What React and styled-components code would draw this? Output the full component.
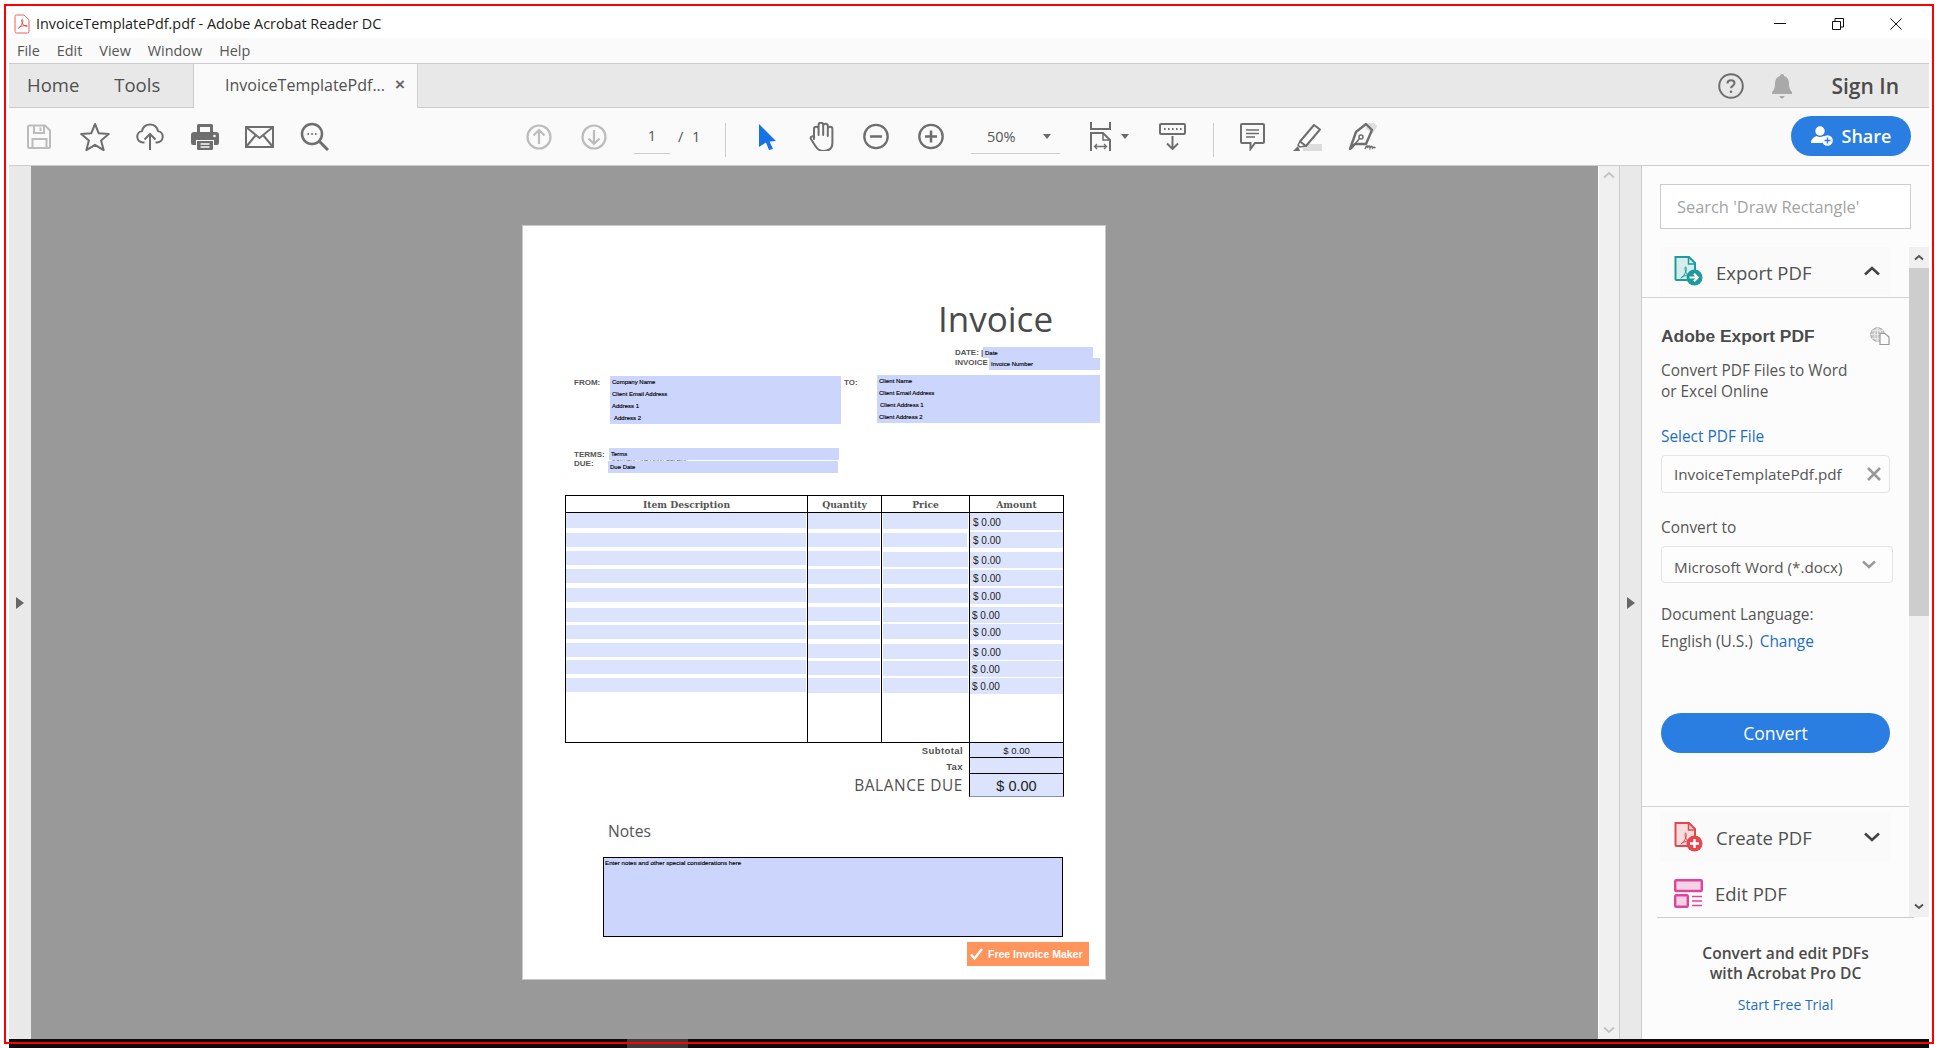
import React from "react";
import styled, { createGlobalStyle } from "styled-components";

const UI = '"Open Sans", "Noto Sans", sans-serif';
const ARIAL = '"Liberation Sans", Arial, sans-serif';
const PX = 522;
const PY = 225;

const Global = createGlobalStyle`
  html, body { margin: 0; padding: 0; background: #fff; }
  * { box-sizing: border-box; }
`;

const Screen = styled.div`
  position: relative;
  width: 1938px;
  height: 1048px;
  padding: 6px 9px 0 9px;
  background: #fff;
  overflow: hidden;
  font-family: ${UI};
  color: #4b4b4b;
`;
const RedFrame = styled.div`
  position: absolute;
  left: 4px;
  top: 4px;
  width: 1930px;
  height: 1040px;
  border: 2px solid #f00;
  pointer-events: none;
  z-index: 5;
`;
const Win = styled.div`
  width: 1920px;
  height: 1042px;
  display: flex;
  flex-direction: column;
`;
const TitleBar = styled.div`
  height: 32px;
  flex: none;
  display: flex;
  align-items: center;
  padding: 3px 0 0 5px;
  background: #fff;
`;
const TitleText = styled.span`
  margin-left: 6px;
  font-size: 14.4px;
  color: #222;
`;
const WinControls = styled.div`
  margin-left: auto;
  margin-right: 27px;
  display: flex;
  gap: 46px;
  align-items: center;
`;
const MenuBar = styled.div`
  height: 26px;
  flex: none;
  display: flex;
  align-items: center;
  gap: 17px;
  padding: 0 0 1px 8px;
  background: #fafafa;
  border-bottom: 1px solid #ccc;
`;
const MenuItem = styled.span`
  font-size: 14.4px;
  color: #555;
`;
const TabBar = styled.div`
  height: 44px;
  flex: none;
  display: flex;
  background: #e8e8e8;
  border-bottom: 1px solid #ccc;
`;
const NavTabs = styled.div`
  width: 184px;
  display: flex;
  align-items: center;
  gap: 35px;
  padding: 0 0 2px 18px;
`;
const NavTab = styled.span`
  font-size: 18.5px;
  color: #505050;
`;
const DocTab = styled.div`
  width: 225px;
  height: 44px;
  display: flex;
  align-items: center;
  padding: 0 0 2px 31px;
  background: #fafafa;
  border-left: 1px solid #ccc;
  border-right: 1px solid #ccc;
`;
const DocTabName = styled.span`
  font-size: 16px;
  color: #505050;
`;
const DocTabClose = styled.span`
  margin-left: 10px;
  font-size: 17px;
  font-weight: 700;
  color: #666;
  font-family: ${ARIAL};
`;
const TabRight = styled.div`
  margin-left: auto;
  display: flex;
  align-items: center;
  padding-right: 30px;
`;
const SignIn = styled.span`
  margin-left: 38px;
  font-size: 21px;
  font-weight: 600;
  color: #4b4b4b;
`;
const BellWrap = styled.span`
  margin-left: 27px;
  display: flex;
`;
const Toolbar = styled.div`
  height: 58px;
  flex: none;
  display: flex;
  align-items: center;
  padding-left: 3px;
  background: #fafafa;
  border-bottom: 1px solid #ccc;
`;
const Slot = styled.span`
  width: 55px;
  height: 40px;
  flex: none;
  margin-left: ${(p) => p.$ml || 0}px;
  padding-left: ${(p) => p.$shift || 0}px;
  display: flex;
  align-items: center;
  justify-content: center;
`;
const PageBox = styled.span`
  width: 36px;
  height: 28px;
  margin-left: 13px;
  margin-top: 6px;
  border-bottom: 1px solid #ccc;
  text-align: center;
  font-size: 14.5px;
  line-height: 20px;
  color: #555;
`;
const PageTotal = styled.span`
  width: 24px;
  margin-left: 8px;
  font-size: 14.5px;
  color: #555;
  word-spacing: 5px;
  white-space: nowrap;
`;
const ToolDivider = styled.span`
  width: 1px;
  height: 34px;
  flex: none;
  margin: 6px 0 0 ${(p) => p.$ml}px;
  background: #ccc;
`;
const ZoomBox = styled.span`
  width: 89px;
  height: 28px;
  margin: 6px 0 0 13px;
  display: flex;
  align-items: center;
  justify-content: space-between;
  padding: 0 9px 5px 16px;
  border-bottom: 1px solid #ccc;
  font-size: 14.5px;
  color: #555;
`;
const Caret = styled.span`
  width: 0;
  height: 0;
  border-left: 4px solid transparent;
  border-right: 4px solid transparent;
  border-top: 5px solid #6a6a6a;
`;
const FitSlot = styled.span`
  margin-left: 30px;
  height: 40px;
  display: flex;
  align-items: center;
  gap: 10px;
`;
const ShareButton = styled.button`
  margin: 0 18px 1px auto;
  width: 120px;
  height: 40px;
  display: flex;
  align-items: center;
  justify-content: center;
  gap: 8px;
  border: 0;
  border-radius: 20px;
  background: #2a7de1;
  color: #fff;
  font-family: ${UI};
  font-size: 18px;
  font-weight: 600;
`;
const Main = styled.div`
  height: 873px;
  flex: none;
  display: flex;
`;
const SideStrip = styled.div`
  width: 22px;
  flex: none;
  display: flex;
  align-items: center;
  justify-content: center;
  background: #e9e9e9;
  border-right: ${(p) => (p.$line ? "1px solid #ccc" : "0")};
`;
const Triangle = styled.span`
  width: 0;
  height: 0;
  border-top: 6px solid transparent;
  border-bottom: 6px solid transparent;
  border-left: 8px solid #666;
`;
const DocArea = styled.div`
  flex: 1;
  display: flex;
  padding: 59px 0 0 491px;
  background: #999;
`;
const DocScroll = styled.div`
  width: 22px;
  flex: none;
  display: flex;
  flex-direction: column;
  justify-content: space-between;
  align-items: center;
  padding: 5px 0;
  background: #f0f0f0;
  border-left: 1px solid #fff;
  border-right: 1px solid #ccc;
`;
const Sidebar = styled.div`
  width: 287px;
  flex: none;
  display: flex;
  flex-direction: column;
  background: #fcfcfc;
`;
const SearchBox = styled.div`
  width: 251px;
  height: 45px;
  flex: none;
  margin: 18px 0 18px 18px;
  padding-left: 16px;
  display: flex;
  align-items: center;
  background: #fff;
  border: 1px solid #ccc;
  font-size: 16.400px;
  color: #a3a3a3;
`;
const PanelScroll = styled.div`
  height: 670px;
  flex: none;
  display: flex;
`;
const Pane = styled.div`
  width: 267px;
  overflow: hidden;
`;
const SectionHead = styled.div`
  height: 51px;
  padding: 0 0 3px 18px;
  border-bottom: 1px solid #d4d4d4;
`;
const ToolRow = styled.div`
  width: 230px;
  height: ${(p) => p.$h}px;
  margin-left: ${(p) => p.$ml || 0}px;
  margin-top: ${(p) => p.$mt || 0}px;
  display: flex;
  align-items: center;
  padding: 0 10px 0 14px;
  background: ${(p) => (p.$plain ? "transparent" : "#fafafa")};
`;
const ToolName = styled.span`
  margin-left: 12px;
  padding-top: ${(p) => p.$pt || 0}px;
  font-size: 18.5px;
  color: #505050;
`;
const RowChevron = styled.span`
  margin-left: auto;
  display: flex;
`;
const Section = styled.div`
  height: 509px;
  padding: 28px 0 0 19px;
  border-bottom: 1px solid #d4d4d4;
`;
const SectionTitleRow = styled.div`
  display: flex;
  align-items: center;
  justify-content: space-between;
  width: 229px;
  height: 20px;
`;
const SectionTitle = styled.span`
  font-family: ${ARIAL};
  font-size: 17.4px;
  font-weight: 700;
  color: #4b4b4b;
`;
const Body = styled.div`
  margin-top: ${(p) => p.$mt}px;
  font-size: 15.4px;
  line-height: ${(p) => p.$lh || 20}px;
  color: #555;
`;
const Link = styled.span`
  color: #1b6fc2;
  margin-left: ${(p) => p.$ml || 0}px;
`;
const Input = styled.div`
  width: ${(p) => p.$w}px;
  height: ${(p) => p.$h}px;
  margin-top: 8px;
  display: flex;
  align-items: center;
  justify-content: space-between;
  padding: 0 ${(p) => p.$pr}px 0 12px;
  background: #fdfdfd;
  border: 1px solid #e4e4e4;
  border-radius: 4px;
  font-size: 15.2px;
  color: #555;
`;
const SelectValue = styled.span`
  padding-top: 4px;
`;
const ConvertButton = styled.button`
  display: block;
  width: 229px;
  height: 40px;
  margin-top: 61px;
  border: 0;
  border-radius: 20px;
  background: #2a7de1;
  color: #fff;
  font-family: ${UI};
  font-size: 17.6px;
`;
const VScroll = styled.div`
  width: 20px;
  flex: none;
  display: flex;
  flex-direction: column;
  background: #f0f0f0;
`;
const ScrollBtn = styled.div`
  height: 21px;
  flex: none;
  display: flex;
  align-items: center;
  justify-content: center;
`;
const ScrollThumb = styled.div`
  height: 348px;
  flex: none;
  background: #cdcdcd;
`;
const ScrollRest = styled.div`
  flex: 1;
`;
const Promo = styled.div`
  flex: 1;
  text-align: center;
`;
const PromoRule = styled.div`
  width: 257px;
  height: 1px;
  margin-left: 15px;
  background: #ccc;
`;
const PromoTitle = styled.div`
  margin-top: 25px;
  font-size: 15.6px;
  font-weight: 600;
  line-height: 20px;
  color: #4b4b4b;
`;
const PromoLink = styled.div`
  margin-top: 12px;
  font-size: 14px;
  line-height: 20px;
  color: #1b6fc2;
`;
const BottomStrip = styled.div`
  height: 9px;
  flex: none;
  background: #0a0a0a;
  padding-left: 618px;
`;
const StripSegment = styled.div`
  width: 61px;
  height: 9px;
  background: #3c3c3c;
`;

/* The PDF page is a free canvas: everything on it sits at its printed place. */
const Page = styled.div`
  position: relative;
  width: 584px;
  height: 755px;
  flex: none;
  background: #fff;
  border: 1px solid #c9c9c9;
  font-family: ${ARIAL};
`;
const Placed = styled.div`
  position: absolute;
  left: ${(p) => p.$x - PX - 1}px;
  top: ${(p) => p.$y - PY - 1}px;
  white-space: nowrap;
`;
const InvoiceTitle = styled(Placed)`
  font-family: ${UI};
  font-size: 35px;
  line-height: 40px;
  color: #4a4a4a;
`;
const FormLabel = styled(Placed)`
  font-size: 8px;
  font-weight: 700;
  line-height: 10px;
  color: #555;
`;
const Field = styled(Placed)`
  width: ${(p) => p.$w}px;
  height: ${(p) => p.$h}px;
  background: ${(p) => p.$bg || "#ccd6fd"};
  display: flex;
  align-items: center;
  padding-left: ${(p) => p.$pad || 0}px;
  padding-top: ${(p) => p.$pt || 0}px;
  color: #222;
  font-size: 10px;
`;
const MultiField = styled(Field)`
  flex-direction: column;
  align-items: flex-start;
  justify-content: flex-start;
`;
const FieldLine = styled.span`
  height: 12px;
  margin-left: ${(p) => p.$ml || 0}px;
  font-size: 6px;
  line-height: 12px;
  color: #000;
  -webkit-text-stroke: 0.15px #000;
`;
const TinyText = styled.span`
  font-size: 6px;
  color: #000;
  -webkit-text-stroke: 0.15px #000;
`;
const GhostText = styled(Placed)`
  font-size: 6px;
  line-height: 8px;
  color: #555;
`;
const ItemTable = styled(Placed)`
  width: 499px;
  height: 248px;
  display: grid;
  grid-template-columns: 242px 74px 88px 1fr;
  grid-template-rows: 17px 1fr;
  border: 1px solid #000;
`;
const HeadCell = styled.div`
  display: flex;
  align-items: center;
  justify-content: center;
  border-bottom: 1px solid #000;
  border-right: ${(p) => (p.$last ? "0" : "1px solid #000")};
  font-family: "DejaVu Serif", serif;
  font-size: 9.2px;
  font-weight: 700;
  color: #555;
`;
const BodyCell = styled.div`
  border-right: ${(p) => (p.$last ? "0" : "1px solid #000")};
`;
const Totals = styled(Placed)`
  width: 494px;
  display: flex;
  flex-direction: column;
`;
const TotalRow = styled.div`
  height: ${(p) => p.$h}px;
  display: flex;
`;
const TotalLabel = styled.div`
  width: 399px;
  padding-right: 6px;
  display: flex;
  align-items: center;
  justify-content: flex-end;
  font-size: ${(p) => p.$fs}px;
  font-weight: ${(p) => (p.$big ? 400 : 700)};
  font-family: ${(p) => (p.$big ? UI : ARIAL)};
  letter-spacing: ${(p) => (p.$big ? 0.6 : 0.4)}px;
  color: #505050;
`;
const TotalValue = styled.div`
  width: 95px;
  display: flex;
  align-items: center;
  justify-content: center;
  padding-top: ${(p) => p.$pt || 0}px;
  background: #dce3fd;
  border-left: 1px solid #000;
  border-right: 1px solid #000;
  border-bottom: 1px solid ${(p) => p.$under || "#000"};
  font-size: ${(p) => p.$fs}px;
  color: #222;
`;
const NotesTitle = styled(Placed)`
  font-family: ${UI};
  font-size: 15.6px;
  line-height: 20px;
  color: #555;
`;
const NotesBox = styled(Placed)`
  width: 460px;
  height: 80px;
  padding: 1px 0 0 1px;
  background: #ccd6fd;
  border: 1px solid #000;
  font-size: 6.2px;
  line-height: 8px;
  color: #000;
  -webkit-text-stroke: 0.15px #000;
`;
const MakerBadge = styled(Placed)`
  width: 122px;
  height: 24px;
  display: flex;
  align-items: center;
  gap: 5px;
  padding-left: 3px;
  background: #ff945c;
  color: #fff;
  font-size: 10.5px;
  font-weight: 700;
`;

const G = "#6e6e6e";
const L = "#bcbcbc";

const Svg = ({ w, h, children, ...r }) => (
  <svg width={w} height={h} viewBox={`0 0 ${w} ${h}`} fill="none" {...r}>
    {children}
  </svg>
);

const Glyph = ({ c, sw = 1.3, t = "" }) => (
  <path d="M5 17c2-1 4-4 5-7 .6-2 .4-4-.4-4-.8 0-.7 2-.2 4 .7 2.500 2.500 4.500 5.600 4.800 1.400.1 1.500-.8.300-1-2.300-.4-6 .5-8.300 1.700C5.500 16.300 4.400 17.500 5 17z" stroke={c} strokeWidth={sw} transform={t} />
);

const PdfIcon = () => (
  <Svg w={16} h={20}>
    <path d="M1 2.500A1.500 1.500 0 0 1 2.500 1H10l5 5v11.500a1.500 1.500 0 0 1-1.500 1.500h-11A1.500 1.500 0 0 1 1 17.500z" fill="#fff" stroke="#e8605f" />
    <Glyph c="#e02f2f" sw={1} t="translate(0.500 0.500) scale(0.8)" />
  </Svg>
);
const MinIcon = () => (<Svg w={12} h={12}><path d="M0 5.500h12" stroke="#111" /></Svg>);
const RestoreIcon = () => (
  <Svg w={12} h={12}><path d="M.5 3.500h8v8h-8zM3 3.500V.5h8.500V9H8.500" stroke="#111" /></Svg>
);
const CloseIcon = () => (<Svg w={12} h={12}><path d="M.5.5l11 11M11.500.5l-11 11" stroke="#111" /></Svg>);
const HelpIcon = () => (
  <Svg w={26} h={26}>
    <circle cx="13" cy="13" r="11.800" stroke={G} strokeWidth="2" />
    <path d="M9.500 10.500c0-2 1.500-3.200 3.500-3.200s3.500 1.200 3.500 3c0 2.500-3.500 2.700-3.500 5" stroke={G} strokeWidth="2" />
    <circle cx="13" cy="18.800" r="1.300" fill={G} />
  </Svg>
);
const BellIcon = () => (
  <Svg w={22} h={26}>
    <path d="M11 1c1.300 0 2 .8 2 2 3.500 1 5 3.800 5 7.500 0 4 1 6.500 3 8.500v2H1v-2c2-2 3-4.500 3-8.500C4 6.800 5.500 4 9 3c0-1.200.7-2 2-2zM8.500 23h5c-.3 1.600-1.200 2.500-2.500 2.500S8.800 24.600 8.500 23z" fill="#a9a9a9" />
  </Svg>
);
const SaveIcon = () => (
  <Svg w={25} h={25}>
    <path d="M2.500 1.500H18l5 5v16a1.500 1.500 0 0 1-1.500 1.500h-19A1.500 1.500 0 0 1 1 22.500V3a1.500 1.500 0 0 1 1.500-1.500z" stroke={L} strokeWidth="2" />
    <path d="M7 2v7h10V2M5.500 24v-9h14v9" stroke={L} strokeWidth="2" />
    <path d="M13.500 3.500v3.500" stroke={L} strokeWidth="2" />
  </Svg>
);
const StarIcon = () => (
  <Svg w={30} h={29}>
    <path d="M15 2l3.800 9.300 10 .7-7.700 6.400 2.500 9.700L15 22.800l-8.600 5.300 2.500-9.700L1.200 12l10-.7z" stroke={G} strokeWidth="2" strokeLinejoin="round" />
  </Svg>
);
const CloudIcon = () => (
  <Svg w={28} h={28}>
    <path d="M8.500 19.500H7a5.800 5.800 0 0 1-1-11.500C7 4 10 1.500 14 1.500S21 4 22 8a5.800 5.800 0 0 1-1 11.500h-1.500" stroke={G} strokeWidth="2" />
    <path d="M14 27V11M8.500 16.500L14 11l5.500 5.500" stroke={G} strokeWidth="2" />
  </Svg>
);
const PrintIcon = () => (
  <Svg w={28} h={27}>
    <path d="M6 10V2.500A1.500 1.500 0 0 1 7.500 1h13A1.500 1.500 0 0 1 22 2.500V10h-3V4H9v6z" fill={G} />
    <path d="M3 9h22a3 3 0 0 1 3 3v8a2 2 0 0 1-2 2h-3v-5H5v5H2a2 2 0 0 1-2-2v-8a3 3 0 0 1 3-3z" fill={G} />
    <path d="M6 18h16v7.500a1.500 1.500 0 0 1-1.500 1.500h-13A1.500 1.500 0 0 1 6 25.500z" fill={G} />
    <path d="M9.500 21h9M9.500 24h9" stroke="#fafafa" strokeWidth="1.300" />
    <circle cx="23.500" cy="13" r="1.300" fill="#fafafa" />
  </Svg>
);
const MailIcon = () => (
  <Svg w={29} h={22}>
    <path d="M1 1h27v20H1zM1 1l13.500 11L28 1M1 21l10-12M28 21L18 9" stroke={G} strokeWidth="2" />
  </Svg>
);
const SearchIcon = () => (
  <Svg w={29} h={29}>
    <circle cx="12" cy="12" r="10" stroke={G} strokeWidth="2.500" />
    <path d="M19 19l9 9" stroke={G} strokeWidth="3" />
    <path d="M7.500 12h1.500M11.300 12h1.500M15 12h1.500" stroke={G} strokeWidth="1.800" />
  </Svg>
);
const CircleArrow = ({ down }) => (
  <Svg w={26} h={26}>
    <circle cx="13" cy="13" r="11.500" stroke={L} strokeWidth="2.200" />
    <path d={down ? "M13 6v14M7.500 14.500L13 20l5.500-5.500" : "M13 20V6M7.500 11.500L13 6l5.500 5.500"} stroke={L} strokeWidth="2.200" />
  </Svg>
);
const PointerIcon = () => (
  <Svg w={17} h={26}>
    <path d="M0 0l17 17-6.500.5L14 25l-4 1-3-7.500L0 23z" fill="#1473e6" />
  </Svg>
);
const HandIcon = () => (
  <Svg w={27} h={29}>
    <path d="M7 17V7a2.300 2.300 0 0 1 4.600 0v6-10a2.300 2.300 0 0 1 4.600 0v10-9a2.300 2.300 0 0 1 4.600 0v10-7a2.300 2.300 0 0 1 4.600 0v14c0 5.500-3.500 8-9 8-3.500 0-6-1.500-8-5l-4.500-7c-1.200-2.200 1.800-3.800 3.300-1.800z" stroke={G} strokeWidth="2" strokeLinejoin="round" />
  </Svg>
);
const ZoomOutIcon = ({ plus }) => (
  <Svg w={26} h={27}>
    <circle cx="13" cy="13.500" r="11.700" stroke={G} strokeWidth="2.300" />
    <path d="M7 13.500h12" stroke={G} strokeWidth="2.500" />
    {plus && <path d="M13 7.500v12" stroke={G} strokeWidth="2.500" />}
  </Svg>
);
const FitIcon = () => (
  <Svg w={21} h={29}>
    <path d="M1 0v7h19V0" stroke={G} strokeWidth="2" />
    <path d="M1 29V11h12l7 7v11" stroke={G} strokeWidth="2" />
    <path d="M13 11v7h7" stroke={G} strokeWidth="1.500" />
    <path d="M5 24.500h11M7 22l-2.500 2.500L7 27M14 22l2.500 2.500L14 27" stroke={G} strokeWidth="1.300" />
  </Svg>
);
const ReadIcon = () => (
  <Svg w={27} h={27}>
    <rect x="1" y="1" width="25" height="10" rx="1" fill="#fafafa" stroke={G} strokeWidth="2" />
    <path d="M5 6h1.600M9 6h1.600M13 6h1.600M17 6h1.600M21 6h1.600" stroke={G} strokeWidth="2" />
    <path d="M13.500 13v13M8 20.500l5.500 5.500 5.500-5.500" stroke={G} strokeWidth="2" />
  </Svg>
);
const CommentIcon = () => (
  <Svg w={25} h={28}>
    <path d="M2 1h21a1 1 0 0 1 1 1v17a1 1 0 0 1-1 1H15l-4.500 6v-6H2a1 1 0 0 1-1-1V2a1 1 0 0 1 1-1z" fill="#fafafa" stroke={G} strokeWidth="2" />
    <path d="M6 7h13M6 10.500h13M6 14h9" stroke={G} strokeWidth="1.300" />
  </Svg>
);
const HighlightIcon = () => (
  <Svg w={29} h={28}>
    <rect x="10" y="21" width="19" height="7" fill="#ddd" />
    <path d="M21 2l6 4.500L13 23l-6-4.500z" stroke={G} strokeWidth="2" fill="#fafafa" strokeLinejoin="round" />
    <path d="M7 18.500L5 22l2 2 5.500-1" stroke={G} strokeWidth="1.500" />
    <path d="M5 23l-5 5h7z" fill={G} />
  </Svg>
);
const SignIcon = () => (
  <Svg w={29} h={28}>
    <rect x="19" y="0" width="9" height="9" fill="#ddd" transform="rotate(35 24 4)" />
    <path d="M8 9l10-8 6 6-6 14H7l-5 5z" fill="none" stroke={G} strokeWidth="2.400" strokeLinejoin="round" />
    <circle cx="13" cy="14" r="2" stroke={G} strokeWidth="1.500" />
    <path d="M3 26l8.500-10.500" stroke={G} strokeWidth="1.500" />
    <path d="M17 26c1.500-4 2.500-4 2.500-1 1.500-3 2-3 2.500 0 1-2.500 2-2.500 2.500 0 1-1 2-1 3 0" stroke={G} strokeWidth="1.500" />
  </Svg>
);
const ShareGlyph = () => (
  <Svg w={23} h={21}>
    <circle cx="9" cy="5" r="4.700" fill="#fff" />
    <path d="M0 17c0-4 3-6 5.500-7 2 1.300 5 1.300 7 0 1 .4 2 1.200 3 2a7 7 0 0 0-4 5z" fill="#fff" />
    <circle cx="16.500" cy="14.500" r="5.300" fill="#fff" />
    <path d="M13.500 14.500h6M16.500 11.500v6" stroke="#2a7de1" strokeWidth="1.400" />
  </Svg>
);
const Chevron = ({ up, c = "#444", sw = 2.600, w = 16, h = 10 }) => (
  <Svg w={w} h={h}>
    <path d={up ? `M1 ${h - 1.500}L${w / 2} 2l${w / 2 - 1} ${h - 3.500}` : `M1 1.500L${w / 2} ${h - 2}l${w / 2 - 1}-${h - 3.500}`} stroke={c} strokeWidth={sw} />
  </Svg>
);
const ExportIcon = () => (
  <Svg w={30} h={30}>
    <path d="M1.500 1h13.500l6 6v17H2.500a1 1 0 0 1-1-1z" fill="#d5ecec" stroke="#1c9a9c" strokeWidth="2" />
    <path d="M14.500 1v7H21" stroke="#1c9a9c" strokeWidth="1.500" />
    <Glyph c="#1c9a9c" sw={1} t="translate(2 5)" />
    <circle cx="20.500" cy="21.500" r="8" fill="#1c9a9c" />
    <path d="M15.500 21.500h7M20 17.800l3.700 3.700-3.700 3.700" stroke="#fff" strokeWidth="2.200" />
  </Svg>
);
const CreateIcon = () => (
  <Svg w={30} h={30}>
    <path d="M1.500 1h13.500l6 6v17H2.500a1 1 0 0 1-1-1z" fill="#fbdcdd" stroke="#e5474f" strokeWidth="2" />
    <path d="M14.500 1v7H21" stroke="#e5474f" strokeWidth="1.500" />
    <Glyph c="#e5474f" sw={1} t="translate(2 5)" />
    <circle cx="20.500" cy="21.500" r="8" fill="#e5474f" />
    <path d="M16 21.500h9M20.500 17v9" stroke="#fff" strokeWidth="2.400" />
  </Svg>
);
const EditIcon = () => (
  <Svg w={29} h={29}>
    <rect x="1.200" y="1.200" width="26.600" height="10.800" rx="1" fill="#f5d3e6" stroke="#e0439c" strokeWidth="2.400" />
    <rect x="1.200" y="16.200" width="12.600" height="11.600" rx="1" fill="#f5d3e6" stroke="#e0439c" strokeWidth="2.400" />
    <path d="M18 17.500h10M18 22h10M18 26.500h10" stroke="#e0439c" strokeWidth="1.300" />
  </Svg>
);
const GlobeDoc = () => (
  <Svg w={20} h={18}>
    <circle cx="7.500" cy="7.500" r="6.800" fill="#c9c9c9" stroke="#a5a5a5" />
    <path d="M.7 7.500h13.600M7.500.7v13.600M2 3.500h11M2 11.500h11M7.500.7c-4 3-4 10.500 0 13.600M7.500.7c4 3 4 10.500 0 13.600" stroke="#eee" strokeWidth=".8" />
    <path d="M10 6.500h5l4 3.500v7.500h-9z" fill="#fcfcfc" stroke="#999" strokeWidth="1.200" />
  </Svg>
);
const RemoveIcon = () => (
  <Svg w={14} h={14}><path d="M1 1l12 12M13 1L1 13" stroke="#999" strokeWidth="2.600" /></Svg>
);
const CheckIcon = () => (
  <Svg w={13} h={12}><path d="M1 6.500l3.500 4L12 1" stroke="#fff" strokeWidth="2.400" /></Svg>
);

const rows = {
  item: [[513, 15], [533, 14], [551, 14], [569, 14], [588, 14], [608, 14], [625, 14], [643, 14], [660, 14], [678, 14]],
  qty: [[513, 16], [533, 14], [551, 15], [569, 15], [588, 15], [607, 14], [625, 14], [644, 14], [661, 14], [678, 15]],
  price: [[513, 16], [533, 14], [552, 15], [569, 15], [588, 15], [607, 15], [624, 15], [644, 15], [661, 15], [678, 15]],
  amount: [[513, 17, 3], [532, 16, 3], [552, 16, 3], [570, 16, 3], [588, 16, 3], [607, 16, 2], [624, 16, 3], [644, 16, 3], [661, 16, 2], [678, 16, 2]],
};

const FromLines = [["Company Name"], ["Client Email Address"], ["Address 1"], ["Address 2", 2]];
const ToLines = [["Client Name"], ["Client Email Address"], ["Client Address 1", 1], ["Client Address 2"]];
const PALE = "#dce3fd";

function InvoicePage() {
  return (
    <Page>
      <InvoiceTitle $x={938} $y={299}>Invoice</InvoiceTitle>
      <FormLabel $x={955} $y={348}>DATE: |</FormLabel>
      <FormLabel $x={955} $y={358}>INVOICE</FormLabel>
      <Field $x={983} $y={347} $w={110} $h={11} $pad={2}><TinyText>Date</TinyText></Field>
      <Field $x={989} $y={358} $w={111} $h={12} $pad={2}><TinyText>Invoice Number</TinyText></Field>
      <FormLabel $x={574} $y={378}>FROM:</FormLabel>
      <MultiField $x={610} $y={376} $w={231} $h={48} $pad={2}>
        {FromLines.map(([t, m]) => <FieldLine key={t} $ml={m}>{t}</FieldLine>)}
      </MultiField>
      <FormLabel $x={844} $y={378}>TO:</FormLabel>
      <MultiField $x={877} $y={375} $w={223} $h={48} $pad={2}>
        {ToLines.map(([t, m]) => <FieldLine key={t} $ml={m}>{t}</FieldLine>)}
      </MultiField>
      <FormLabel $x={574} $y={450}>TERMS:</FormLabel>
      <FormLabel $x={574} $y={459}>DUE:</FormLabel>
      <GhostText $x={612} $y={456}>Payment Due Upon Receipt</GhostText>
      <Field $x={609} $y={448} $w={230} $h={12} $pad={2}><TinyText>Terms</TinyText></Field>
      <Field $x={608} $y={461} $w={230} $h={12} $pad={2}><TinyText>Due Date</TinyText></Field>

      <ItemTable $x={565} $y={495}>
        <HeadCell>Item Description</HeadCell>
        <HeadCell>Quantity</HeadCell>
        <HeadCell>Price</HeadCell>
        <HeadCell $last>Amount</HeadCell>
        <BodyCell />
        <BodyCell />
        <BodyCell />
        <BodyCell $last />
      </ItemTable>
      {rows.item.map(([y, h]) => <Field key={y} $x={566} $y={y} $w={240} $h={h} $bg={PALE} />)}
      {rows.qty.map(([y, h]) => <Field key={y} $x={808} $y={y} $w={72} $h={h} $bg={PALE} />)}
      {rows.price.map(([y, h], i) => <Field key={y} $x={883} $y={y} $w={i === 1 ? 84 : 85} $h={h} $bg={PALE} />)}
      {rows.amount.map(([y, h, pad]) => (
        <Field key={y} $x={970} $y={y} $w={93} $h={h} $bg={PALE} $pad={pad} $pt={1}>$ 0.00</Field>
      ))}

      <Totals $x={570} $y={743}>
        <TotalRow $h={15}>
          <TotalLabel $fs={9.5}>Subtotal</TotalLabel>
          <TotalValue $fs={9.5}>$ 0.00</TotalValue>
        </TotalRow>
        <TotalRow $h={16}>
          <TotalLabel $fs={9.5}>Tax</TotalLabel>
          <TotalValue $fs={9.5} />
        </TotalRow>
        <TotalRow $h={23}>
          <TotalLabel $fs={15.4} $big>BALANCE DUE</TotalLabel>
          <TotalValue $fs={14.500} $pt={2} $under="#8890b0">$ 0.00</TotalValue>
        </TotalRow>
      </Totals>

      <NotesTitle $x={608} $y={821}>Notes</NotesTitle>
      <NotesBox $x={603} $y={857}>Enter notes and other special considerations here</NotesBox>
      <MakerBadge $x={967} $y={942}><CheckIcon />Free Invoice Maker</MakerBadge>
    </Page>
  );
}

export default function App() {
  return (
    <Screen>
      <Global />
      <Win>
        <TitleBar>
          <PdfIcon />
          <TitleText>InvoiceTemplatePdf.pdf - Adobe Acrobat Reader DC</TitleText>
          <WinControls><MinIcon /><RestoreIcon /><CloseIcon /></WinControls>
        </TitleBar>
        <MenuBar>
          {["File", "Edit", "View", "Window", "Help"].map((m) => <MenuItem key={m}>{m}</MenuItem>)}
        </MenuBar>
        <TabBar>
          <NavTabs><NavTab>Home</NavTab><NavTab>Tools</NavTab></NavTabs>
          <DocTab><DocTabName>InvoiceTemplatePdf...</DocTabName><DocTabClose>×</DocTabClose></DocTab>
          <TabRight>
            <HelpIcon />
            <BellWrap><BellIcon /></BellWrap>
            <SignIn>Sign In</SignIn>
          </TabRight>
        </TabBar>
        <Toolbar>
          <Slot><SaveIcon /></Slot>
          <Slot><StarIcon /></Slot>
          <Slot><CloudIcon /></Slot>
          <Slot><PrintIcon /></Slot>
          <Slot><MailIcon /></Slot>
          <Slot><SearchIcon /></Slot>
          <Slot $ml={169}><CircleArrow /></Slot>
          <Slot><CircleArrow down /></Slot>
          <PageBox>1</PageBox>
          <PageTotal>/ 1</PageTotal>
          <ToolDivider $ml={23} />
          <Slot $ml={12} $shift={4}><PointerIcon /></Slot>
          <Slot><HandIcon /></Slot>
          <Slot><ZoomOutIcon /></Slot>
          <Slot><ZoomOutIcon plus /></Slot>
          <ZoomBox>50%<Caret /></ZoomBox>
          <FitSlot><FitIcon /><Caret /></FitSlot>
          <Slot $ml={16}><ReadIcon /></Slot>
          <ToolDivider $ml={13} />
          <Slot $ml={11}><CommentIcon /></Slot>
          <Slot><HighlightIcon /></Slot>
          <Slot><SignIcon /></Slot>
          <ShareButton><ShareGlyph />Share</ShareButton>
        </Toolbar>
        <Main>
          <SideStrip><Triangle /></SideStrip>
          <DocArea><InvoicePage /></DocArea>
          <DocScroll>
            <Chevron up c="#c4c4c4" sw={2} w={12} h={8} />
            <Chevron c="#c4c4c4" sw={2} w={12} h={8} />
          </DocScroll>
          <SideStrip $line><Triangle /></SideStrip>
          <Sidebar>
            <SearchBox>Search 'Draw Rectangle'</SearchBox>
            <PanelScroll>
              <Pane>
                <SectionHead>
                  <ToolRow $h={48}>
                    <ExportIcon />
                    <ToolName $pt={2}>Export PDF</ToolName>
                    <RowChevron><Chevron up /></RowChevron>
                  </ToolRow>
                </SectionHead>
                <Section>
                  <SectionTitleRow>
                    <SectionTitle>Adobe Export PDF</SectionTitle>
                    <GlobeDoc />
                  </SectionTitleRow>
                  <Body $mt={14} $lh={21}>Convert PDF Files to Word<br />or Excel Online</Body>
                  <Body $mt={25}><Link>Select PDF File</Link></Body>
                  <Input $w={229} $h={38} $pr={8}>InvoiceTemplatePdf.pdf<RemoveIcon /></Input>
                  <Body $mt={25}>Convert to</Body>
                  <Input $w={232} $h={37} $pr={16}>
                    <SelectValue>Microsoft Word (*.docx)</SelectValue>
                    <Chevron c="#999" sw={2.400} w={14} h={9} />
                  </Input>
                  <Body $mt={22}>Document Language:</Body>
                  <Body $mt={7}>English (U.S.)<Link $ml={7}>Change</Link></Body>
                  <ConvertButton>Convert</ConvertButton>
                </Section>
                <ToolRow $h={50} $ml={18} $mt={5}>
                  <CreateIcon />
                  <ToolName>Create PDF</ToolName>
                  <RowChevron><Chevron /></RowChevron>
                </ToolRow>
                <ToolRow $h={48} $ml={18} $mt={7} $plain>
                  <EditIcon />
                  <ToolName>Edit PDF</ToolName>
                </ToolRow>
              </Pane>
              <VScroll>
                <ScrollBtn><Chevron up c="#555" sw={2} w={10} h={7} /></ScrollBtn>
                <ScrollThumb />
                <ScrollRest />
                <ScrollBtn><Chevron c="#555" sw={2} w={10} h={7} /></ScrollBtn>
              </VScroll>
            </PanelScroll>
            <Promo>
              <PromoRule />
              <PromoTitle>Convert and edit PDFs<br />with Acrobat Pro DC</PromoTitle>
              <PromoLink>Start Free Trial</PromoLink>
            </Promo>
          </Sidebar>
        </Main>
        <BottomStrip><StripSegment /></BottomStrip>
      </Win>
      <RedFrame />
    </Screen>
  );
}
